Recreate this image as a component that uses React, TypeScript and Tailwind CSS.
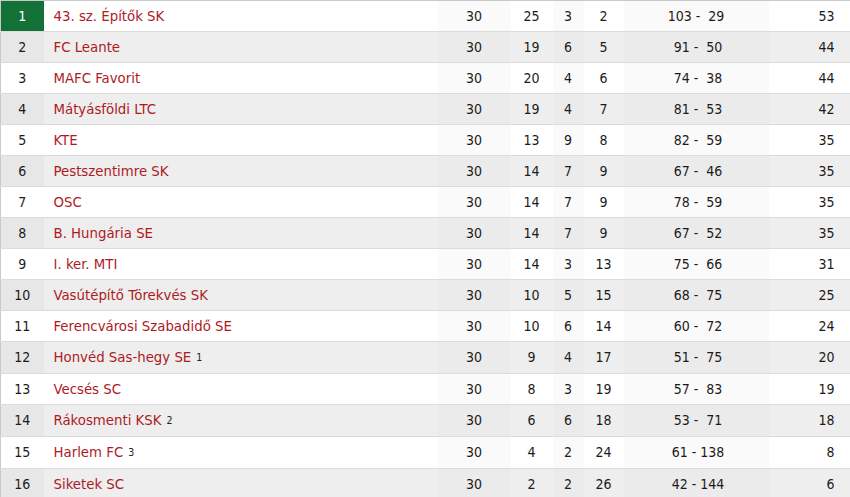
import React from "react";

type Row = {
  pos: number;
  team: string;
  note?: string;
  m: number;
  w: number;
  d: number;
  l: number;
  gf: number;
  ga: number;
  pts: number;
};

const rows: Row[] = [
  { pos: 1, team: "43. sz. Építők SK", m: 30, w: 25, d: 3, l: 2, gf: 103, ga: 29, pts: 53 },
  { pos: 2, team: "FC Leante", m: 30, w: 19, d: 6, l: 5, gf: 91, ga: 50, pts: 44 },
  { pos: 3, team: "MAFC Favorit", m: 30, w: 20, d: 4, l: 6, gf: 74, ga: 38, pts: 44 },
  { pos: 4, team: "Mátyásföldi LTC", m: 30, w: 19, d: 4, l: 7, gf: 81, ga: 53, pts: 42 },
  { pos: 5, team: "KTE", m: 30, w: 13, d: 9, l: 8, gf: 82, ga: 59, pts: 35 },
  { pos: 6, team: "Pestszentimre SK", m: 30, w: 14, d: 7, l: 9, gf: 67, ga: 46, pts: 35 },
  { pos: 7, team: "OSC", m: 30, w: 14, d: 7, l: 9, gf: 78, ga: 59, pts: 35 },
  { pos: 8, team: "B. Hungária SE", m: 30, w: 14, d: 7, l: 9, gf: 67, ga: 52, pts: 35 },
  { pos: 9, team: "I. ker. MTI", m: 30, w: 14, d: 3, l: 13, gf: 75, ga: 66, pts: 31 },
  { pos: 10, team: "Vasútépítő Törekvés SK", m: 30, w: 10, d: 5, l: 15, gf: 68, ga: 75, pts: 25 },
  { pos: 11, team: "Ferencvárosi Szabadidő SE", m: 30, w: 10, d: 6, l: 14, gf: 60, ga: 72, pts: 24 },
  { pos: 12, team: "Honvéd Sas-hegy SE", note: "1", m: 30, w: 9, d: 4, l: 17, gf: 51, ga: 75, pts: 20 },
  { pos: 13, team: "Vecsés SC", m: 30, w: 8, d: 3, l: 19, gf: 57, ga: 83, pts: 19 },
  { pos: 14, team: "Rákosmenti KSK", note: "2", m: 30, w: 6, d: 6, l: 18, gf: 53, ga: 71, pts: 18 },
  { pos: 15, team: "Harlem FC", note: "3", m: 30, w: 4, d: 2, l: 24, gf: 61, ga: 138, pts: 8 },
  { pos: 16, team: "Siketek SC", m: 30, w: 2, d: 2, l: 26, gf: 42, ga: 144, pts: 6 },
];

// pad goals to 3 chars with nbsp so the dash lines up
const pad = (n: number) => {
  const s = String(n);
  return s.length < 3 ? "\u00a0".repeat(3 - s.length) + s : s;
};

const App: React.FC = () => {
  return (
    <div className="w-[850px] h-[497px] overflow-hidden bg-white" style={{ fontFamily: "'DejaVu Sans Condensed', 'DejaVu Sans', sans-serif" }}>
      <table className="w-[850px] border-collapse table-fixed text-[14px] text-[#1b1b1b]">
        <colgroup>
          <col className="w-[43px]" />
          <col className="w-[394px]" />
          <col className="w-[73px]" />
          <col className="w-[42px]" />
          <col className="w-[31px]" />
          <col className="w-[40px]" />
          <col className="w-[145px]" />
          <col className="w-[82px]" />
        </colgroup>
        <tbody className="border-t border-l border-[#c9c9c9]">
          {rows.map((r, i) => {
            const even = i % 2 === 1;
            const shade = even ? "bg-[#ebebeb]" : "bg-[#fafafa]";
            return (
              <tr
                key={r.pos}
                className={`border-b border-[#dcdcdc] ${r.note ? "h-[32px]" : "h-[31px]"} ${
                  even ? "bg-[#eeeeee]" : "bg-white"
                }`}
              >
                <td
                  className={`text-center p-0 ${
                    r.pos === 1 ? "bg-[#137138] text-white" : even ? "bg-[#e7e7e7]" : ""
                  }`}
                >
                  {r.pos}
                </td>
                <td className="pl-[10px] text-[14.8px] text-[#ad1a1f] whitespace-nowrap">
                  {r.team}
                  {r.note && (
                    <sup className="text-[10.5px] text-[#222] ml-[5px] relative top-[-1px]">{r.note}</sup>
                  )}
                </td>
                <td className={`text-center ${shade}`}>{r.m}</td>
                <td className="text-center">{r.w}</td>
                <td className={`text-center ${shade}`}>{r.d}</td>
                <td className="text-center">{r.l}</td>
                <td className={`text-center whitespace-pre ${shade}`}>
                  {pad(r.gf)} - {pad(r.ga)}
                </td>
                <td className="text-right pr-[16px]">{r.pts}</td>
              </tr>
            );
          })}
        </tbody>
      </table>
    </div>
  );
};

export default App;
